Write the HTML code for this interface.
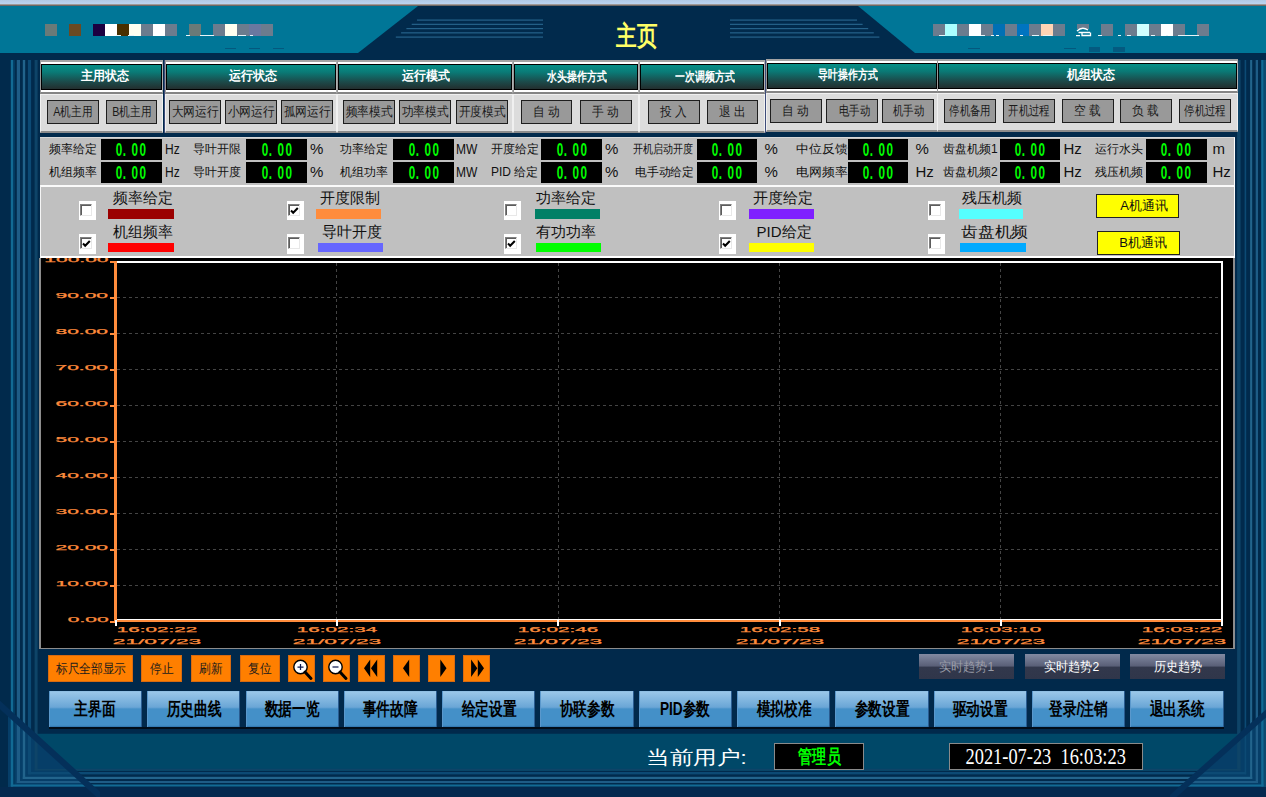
<!DOCTYPE html>
<html lang="zh"><head><meta charset="utf-8"><title>主页</title>
<style>
html,body{margin:0;padding:0;background:#012a4c;}
body{width:1266px;height:797px;overflow:hidden;position:relative;font-family:"Liberation Sans",sans-serif;}
#root{position:absolute;left:0;top:0;width:1266px;height:797px;overflow:hidden;}
.abs{position:absolute;}
.t{position:absolute;white-space:nowrap;overflow:visible;line-height:1;}
.c{display:flex;align-items:center;justify-content:center;white-space:nowrap;overflow:hidden;}
.c>span{display:inline-block;}
.hdr{position:absolute;box-sizing:border-box;background:#fff;border-left:1px solid #9a9a9a;border-right:1px solid #b0b0b0;border-top:2px solid #a4a4a4;border-bottom:2px solid #858585;}
.hdr>div{position:absolute;left:0;top:2px;right:0;bottom:2px;box-sizing:border-box;border:1px solid #000;background:linear-gradient(#089088 0%,#0a7a76 30%,#1c4a4a 70%,#222e2e 100%);color:#fff;font-weight:bold;font-size:13px;}
.brow{position:absolute;box-sizing:border-box;background:#dcdcdc;border:1px solid #f0f0f0;border-bottom:2px solid #8c8c8c;}
.sb{position:absolute;box-sizing:border-box;background:#999;border:1px solid #1e1e1e;color:#1a1a1a;font-size:13px;}
.lab{position:absolute;font-size:12px;color:#111;white-space:nowrap;line-height:14px;height:14px;}
.val{position:absolute;background:#000;color:#00ff00;font-size:17.6px;font-weight:bold;}
.val b{display:inline-block;width:11.9px;text-align:center;font-weight:bold;}
.val b.p{text-align:left;}
.unit{position:absolute;font-size:15px;color:#111;line-height:16px;white-space:nowrap;}
.cb{position:absolute;width:17px;height:20px;background:#fff;}
.cb i{position:absolute;left:1px;top:3px;width:12px;height:12px;box-sizing:border-box;border:1px solid #808080;border-right-color:#e8e8e8;border-bottom-color:#e8e8e8;background:#fff;}
.cb i:before{content:"";position:absolute;left:0;top:0;width:9px;height:9px;border-left:1px solid #5c5c5c;border-top:1px solid #5c5c5c;}
.bar{position:absolute;height:10px;}
.ll{position:absolute;font-size:15px;color:#111;white-space:nowrap;line-height:16px;}
.ob{position:absolute;box-sizing:border-box;background:#ff7f00;border:1px solid #d86a10;color:#1a1a1a;font-size:13px;}
.nb{position:absolute;box-sizing:border-box;height:36px;background:linear-gradient(#8cbce0 0%,#98c6e8 4%,#6aa6d6 45%,#4490c8 50%,#4490c8 95%,#2f72aa 100%);border-right:1px solid #2a5c90;border-left:1px solid #5a98cc;color:#000;font-weight:bold;font-size:18px;}
.tb{position:absolute;box-sizing:border-box;height:24px;background:linear-gradient(#828aa2 0%,#5a6078 47%,#32384c 54%,#30364a 100%);font-size:13px;}
.ax{position:absolute;color:#ff8c3c;-webkit-text-stroke:0.25px #ff8c3c;font-size:8px;line-height:8px;white-space:nowrap;transform-origin:0 0;}
</style></head><body><div id="root">

<svg class="abs" style="left:0;top:0" width="1266" height="797" viewBox="0 0 1266 797">
<rect x="0" y="0" width="1266" height="797" fill="#012a4c"/>
<rect x="37" y="733.5" width="1201" height="37.5" fill="#004868"/>
<rect x="37" y="648" width="1201" height="85.5" fill="#01294b"/>
<polygon points="8,712 96,792 8,792" fill="#063e68"/>
<polygon points="1266,713 1182,788 1266,788" fill="#063e68"/>
<rect x="1263.6" y="60" width="2.4" height="728" fill="#0c4a70"/>
<rect x="13.2" y="60" width="1.8" height="725" fill="#023a60"/>
<rect x="10.8" y="60" width="2.4" height="726.5" fill="#126a94"/>
<rect x="1261.2" y="60" width="2.4" height="726.5" fill="#126a94"/>
<rect x="10.8" y="784.5" width="1252.8" height="2.0" fill="#126a94"/>
<rect x="16.8" y="60" width="3.2" height="723.0" fill="#1e5c86"/>
<rect x="1255.7" y="60" width="2.3" height="723.0" fill="#1e5c86"/>
<rect x="16.8" y="781.0" width="1241.2" height="2.0" fill="#1e5c86"/>
<rect x="22.8" y="60" width="2.4" height="719.0" fill="#22648c"/>
<rect x="1250.1" y="60" width="2.1" height="719.0" fill="#22648c"/>
<rect x="22.8" y="776.8" width="1229.4" height="2.2" fill="#22648c"/>
<rect x="27.9" y="60" width="3.2" height="714.4" fill="#0c4a74"/>
<rect x="1244.6" y="60" width="1.6" height="714.4" fill="#0c4a74"/>
<rect x="27.9" y="772.0" width="1218.3" height="2.4" fill="#0c4a74"/>
<rect x="34.6" y="60" width="3.0" height="710.6" fill="#0e4468"/>
<rect x="1237.1" y="60" width="3.5" height="710.6" fill="#0e4468"/>
<rect x="34.6" y="768.8" width="1206.0" height="1.8" fill="#0e4468"/>
<rect x="0" y="787" width="1266" height="10" fill="#04294f"/>
<polygon points="0,700.8 0,709.2 100,800.2 100,791.8" fill="#04305a"/>
<polygon points="1266,709.4 1266,717.4 1170,803 1170,795" fill="#04305a"/>
<defs><linearGradient id="tg" x1="0" y1="0" x2="0" y2="1"><stop offset="0" stop-color="#b0c9e5"/><stop offset="1" stop-color="#bcd4f0"/></linearGradient></defs>
<rect x="0" y="0" width="1266" height="4" fill="url(#tg)"/>
<rect x="0" y="4" width="1266" height="1" fill="#a09a98"/>
<rect x="0" y="5" width="1266" height="1" fill="#6e6866"/>
<rect x="0" y="6" width="1266" height="47" fill="#007697"/>
<polygon points="418,6 858,6 915,53 915,58 358,58 358,53" fill="#012a4c"/>
<rect x="0" y="53" width="1266" height="6" fill="#012a4c"/>
<rect x="417.0" y="19.50" width="126.0" height="1.2" fill="#25628a"/>
<rect x="730" y="19.50" width="127.0" height="1.2" fill="#25628a"/>
<rect x="411.7" y="23.75" width="131.3" height="1.2" fill="#25628a"/>
<rect x="730" y="23.75" width="132.6" height="1.2" fill="#25628a"/>
<rect x="406.4" y="28.00" width="136.6" height="1.2" fill="#25628a"/>
<rect x="730" y="28.00" width="138.2" height="1.2" fill="#25628a"/>
<rect x="401.1" y="32.25" width="141.9" height="1.2" fill="#25628a"/>
<rect x="730" y="32.25" width="143.8" height="1.2" fill="#25628a"/>
<rect x="395.8" y="36.50" width="147.2" height="1.2" fill="#25628a"/>
<rect x="730" y="36.50" width="149.4" height="1.2" fill="#25628a"/>
</svg>
<div class="abs" style="left:44.5px;top:23.5px;width:12px;height:12px;background:#6a7a78"></div>
<div class="abs" style="left:68.5px;top:23.5px;width:12px;height:12px;background:#6a4a22"></div>
<div class="abs" style="left:92.5px;top:23.5px;width:12px;height:12px;background:#1c0040"></div>
<div class="abs" style="left:104.5px;top:23.5px;width:12px;height:12px;background:#fff"></div>
<div class="abs" style="left:116.5px;top:23.5px;width:12px;height:12px;background:#4a3000"></div>
<div class="abs" style="left:128.5px;top:23.5px;width:12px;height:12px;background:#fffff0"></div>
<div class="abs" style="left:140.5px;top:23.5px;width:12px;height:12px;background:#6c7c8e"></div>
<div class="abs" style="left:152.5px;top:23.5px;width:12px;height:12px;background:#fff"></div>
<div class="abs" style="left:164.5px;top:23.5px;width:12px;height:12px;background:#6c7c8e"></div>
<div class="abs" style="left:188.5px;top:23.5px;width:12px;height:12px;background:#6a7a78"></div>
<div class="abs" style="left:212.5px;top:23.5px;width:12px;height:12px;background:#6c7c8e"></div>
<div class="abs" style="left:224.5px;top:23.5px;width:12px;height:12px;background:#fffff0"></div>
<div class="abs" style="left:236.5px;top:23.5px;width:12px;height:12px;background:#6c7c8e"></div>
<div class="abs" style="left:248.5px;top:23.5px;width:12px;height:12px;background:#6a78a0"></div>
<div class="abs" style="left:260.5px;top:23.5px;width:12px;height:12px;background:#6c7c8e"></div>
<div class="abs" style="left:932.5px;top:23.5px;width:12px;height:12px;background:#6c7c8e"></div>
<div class="abs" style="left:944.5px;top:23.5px;width:12px;height:12px;background:#aaffff"></div>
<div class="abs" style="left:956.5px;top:23.5px;width:12px;height:12px;background:#6c7c8e"></div>
<div class="abs" style="left:968.5px;top:23.5px;width:12px;height:12px;background:#fff"></div>
<div class="abs" style="left:980.5px;top:23.5px;width:12px;height:12px;background:#6c7c8e"></div>
<div class="abs" style="left:992.5px;top:23.5px;width:12px;height:12px;background:#0070b4"></div>
<div class="abs" style="left:1004.5px;top:23.5px;width:12px;height:12px;background:#6c7c8e"></div>
<div class="abs" style="left:1016.5px;top:23.5px;width:12px;height:12px;background:#0074c0"></div>
<div class="abs" style="left:1028.5px;top:23.5px;width:12px;height:12px;background:#6c7c8e"></div>
<div class="abs" style="left:1040.5px;top:23.5px;width:12px;height:12px;background:#ffd4b4"></div>
<div class="abs" style="left:1052.5px;top:23.5px;width:12px;height:12px;background:#6c7c8e"></div>
<div class="abs" style="left:1100.5px;top:23.5px;width:12px;height:12px;background:#6c7c8e"></div>
<div class="abs" style="left:1124.5px;top:23.5px;width:12px;height:12px;background:#6c7c8e"></div>
<div class="abs" style="left:1136.5px;top:23.5px;width:12px;height:12px;background:#d0ffff"></div>
<div class="abs" style="left:1148.5px;top:23.5px;width:12px;height:12px;background:#6c7c8e"></div>
<div class="abs" style="left:1160.5px;top:23.5px;width:12px;height:12px;background:#fff"></div>
<div class="abs" style="left:1172.5px;top:23.5px;width:12px;height:12px;background:#6c7c8e"></div>
<div class="abs" style="left:1196.5px;top:23.5px;width:12px;height:12px;background:#6c7c8e"></div>
<div class="abs" style="left:224.6px;top:47.6px;width:11.8px;height:1.2px;background:#04587e"></div>
<div class="abs" style="left:248.6px;top:47.6px;width:11.8px;height:1.2px;background:#04587e"></div>
<div class="abs" style="left:272.6px;top:47.6px;width:11.8px;height:1.2px;background:#04587e"></div>
<div class="abs" style="left:968.4px;top:47.6px;width:11.5px;height:1.2px;background:#04587e"></div>
<div class="abs" style="left:1064.4px;top:47.6px;width:11.6px;height:1.2px;background:#04587e"></div>
<div class="abs" style="left:1088.8px;top:47.2px;width:11.4px;height:4.5px;background:#045a80"></div>
<div class="abs" style="left:1112.5px;top:47.2px;width:12px;height:4.5px;background:#045a80"></div>
<div class="abs" style="left:1076.5px;top:23.5px;width:12px;height:5px;background:#6c7c8e"></div>
<svg class="abs" style="left:1070px;top:20px" width="30" height="20" viewBox="1070 20 30 20"><path d="M1077 31 Q1082 26 1088 30 M1078.5 32.5 H1090 M1082 33 V35.5 H1090.5 V32.5 M1076 35.6 H1080" fill="none" stroke="#fff" stroke-width="1.3"/></svg>
<div class="abs" style="left:939px;top:35.3px;width:6px;height:1px;background:#e8f4f8"></div>
<div class="abs" style="left:980.5px;top:35.3px;width:4px;height:1px;background:#e8f4f8"></div>
<div class="abs" style="left:991px;top:35.3px;width:2.5px;height:1px;background:#e8f4f8"></div>
<div class="abs" style="left:996px;top:35.3px;width:2.5px;height:1px;background:#e8f4f8"></div>
<div class="abs" style="left:1020px;top:35.3px;width:3px;height:1px;background:#e8f4f8"></div>
<div class="abs" style="left:1032px;top:35.3px;width:7px;height:1px;background:#e8f4f8"></div>
<div class="abs" style="left:1043px;top:35.3px;width:9px;height:1px;background:#e8f4f8"></div>
<div class="abs" style="left:1098px;top:35.3px;width:4px;height:1px;background:#e8f4f8"></div>
<div class="abs" style="left:1118px;top:35.3px;width:3px;height:1px;background:#e8f4f8"></div>
<div class="abs" style="left:1127px;top:35.3px;width:3.5px;height:1px;background:#e8f4f8"></div>
<div class="abs" style="left:1151px;top:35.3px;width:4px;height:1px;background:#e8f4f8"></div>
<div class="abs" style="left:1166px;top:35.3px;width:2px;height:1px;background:#e8f4f8"></div>
<div class="abs" style="left:1178px;top:35.3px;width:21px;height:1px;background:#e8f4f8"></div>
<div class="abs" style="left:116px;top:35.3px;width:5px;height:1px;background:#e8f4f8"></div>
<div class="abs" style="left:128px;top:35.3px;width:6px;height:1px;background:#e8f4f8"></div>
<div class="abs" style="left:186px;top:35.3px;width:4px;height:1px;background:#e8f4f8"></div>
<div class="abs" style="left:200px;top:35.3px;width:12px;height:1px;background:#e8f4f8"></div>
<div class="abs" style="left:211px;top:35.3px;width:3px;height:1px;background:#e8f4f8"></div>
<div class="abs" style="left:238px;top:35.3px;width:8px;height:1px;background:#e8f4f8"></div>
<div class="abs" style="left:250px;top:35.3px;width:3px;height:1px;background:#e8f4f8"></div>
<div class="abs c" style="left:597px;top:19px;width:80px;height:34px;color:#ffff66;font-weight:bold;font-size:27px;overflow:visible"><span style="transform:scaleX(.76)">主页</span></div>
<div class="hdr" style="left:40px;top:60px;width:123px;height:34px"><div class="c"><span style="transform:scaleX(0.92);position:relative;left:3.5px;top:-1px">主用状态</span></div></div>
<div class="brow" style="left:40px;top:94px;width:123px;height:39px"></div>
<div class="sb c" style="left:47px;top:100px;width:52px;height:24px"><span style="transform:scaleX(0.82);position:relative;left:0px">A机主用</span></div>
<div class="sb c" style="left:106px;top:100px;width:51px;height:24px"><span style="transform:scaleX(0.82);position:relative;left:0px">B机主用</span></div>
<div class="hdr" style="left:165px;top:60px;width:172px;height:34px"><div class="c"><span style="transform:scaleX(0.92);position:relative;left:2px;top:-1px">运行状态</span></div></div>
<div class="brow" style="left:165px;top:94px;width:172px;height:39px"></div>
<div class="sb c" style="left:169px;top:100px;width:52px;height:24px"><span style="transform:scaleX(0.9);position:relative;left:0px">大网运行</span></div>
<div class="sb c" style="left:225px;top:100px;width:52px;height:24px"><span style="transform:scaleX(0.9);position:relative;left:0px">小网运行</span></div>
<div class="sb c" style="left:281px;top:100px;width:52px;height:24px"><span style="transform:scaleX(0.9);position:relative;left:0px">孤网运行</span></div>
<div class="hdr" style="left:336.5px;top:60px;width:176.0px;height:34px"><div class="c"><span style="transform:scaleX(0.92);position:relative;left:1.5px;top:-1px">运行模式</span></div></div>
<div class="brow" style="left:336.5px;top:94px;width:176.0px;height:39px"></div>
<div class="sb c" style="left:343px;top:100px;width:52px;height:24px"><span style="transform:scaleX(0.9);position:relative;left:0px">频率模式</span></div>
<div class="sb c" style="left:399px;top:100px;width:52px;height:24px"><span style="transform:scaleX(0.9);position:relative;left:0px">功率模式</span></div>
<div class="sb c" style="left:456px;top:100px;width:52px;height:24px"><span style="transform:scaleX(0.9);position:relative;left:0px">开度模式</span></div>
<div class="hdr" style="left:512.5px;top:60px;width:126.5px;height:34px"><div class="c"><span style="transform:scaleX(0.76);position:relative;left:1.3px;top:0px">水头操作方式</span></div></div>
<div class="brow" style="left:512.5px;top:94px;width:126.5px;height:39px"></div>
<div class="sb c" style="left:521px;top:100px;width:51px;height:24px"><span style="transform:scaleX(0.9);position:relative;left:0px">自 动</span></div>
<div class="sb c" style="left:580px;top:100px;width:52px;height:24px"><span style="transform:scaleX(0.9);position:relative;left:0px">手 动</span></div>
<div class="hdr" style="left:639px;top:60px;width:126px;height:34px"><div class="c"><span style="transform:scaleX(0.76);position:relative;left:3.2px;top:0px">一次调频方式</span></div></div>
<div class="brow" style="left:639px;top:94px;width:126px;height:39px"></div>
<div class="sb c" style="left:648px;top:100px;width:52px;height:24px"><span style="transform:scaleX(0.9);position:relative;left:0px">投 入</span></div>
<div class="sb c" style="left:707px;top:100px;width:51px;height:24px"><span style="transform:scaleX(0.9);position:relative;left:0px">退 出</span></div>
<div class="hdr" style="left:766px;top:59px;width:171.5px;height:34px"><div class="c"><span style="transform:scaleX(0.76);position:relative;left:-3.7px;top:-1px">导叶操作方式</span></div></div>
<div class="brow" style="left:766px;top:93px;width:171.5px;height:39px"></div>
<div class="sb c" style="left:770px;top:99px;width:52px;height:24px"><span style="transform:scaleX(0.9);position:relative;left:0px">自 动</span></div>
<div class="sb c" style="left:826px;top:99px;width:52px;height:24px"><span style="transform:scaleX(0.8);position:relative;left:2.5px">电手动</span></div>
<div class="sb c" style="left:882px;top:99px;width:52px;height:24px"><span style="transform:scaleX(0.8);position:relative;left:0px">机手动</span></div>
<div class="hdr" style="left:937px;top:59px;width:300.5px;height:34px"><div class="c"><span style="transform:scaleX(0.92);position:relative;left:3.75px;top:-1px">机组状态</span></div></div>
<div class="brow" style="left:937px;top:93px;width:300.5px;height:39px"></div>
<div class="sb c" style="left:944px;top:99px;width:52px;height:24px"><span style="transform:scaleX(0.8);position:relative;left:0px">停机备用</span></div>
<div class="sb c" style="left:1003px;top:99px;width:52px;height:24px"><span style="transform:scaleX(0.8);position:relative;left:0px">开机过程</span></div>
<div class="sb c" style="left:1062px;top:99px;width:52px;height:24px"><span style="transform:scaleX(0.9);position:relative;left:0px">空 载</span></div>
<div class="sb c" style="left:1120px;top:99px;width:52px;height:24px"><span style="transform:scaleX(0.9);position:relative;left:0px">负 载</span></div>
<div class="sb c" style="left:1179px;top:99px;width:52px;height:24px"><span style="transform:scaleX(0.8);position:relative;left:0px">停机过程</span></div>
<div class="abs" style="left:164px;top:60px;width:1px;height:73px;background:#3e4c7a"></div>
<div class="abs" style="left:765.3px;top:60px;width:1px;height:73px;background:#3e4c7a"></div>
<div class="abs" style="left:40px;top:137px;width:1195px;height:48px;box-sizing:border-box;background:#c0c0c0;border-right:1px solid #fff;border-top:1px solid #d8d8d8"></div>
<div class="lab" style="left:49px;top:142px;transform-origin:0 50%;transform:scaleX(1)">频率给定</div>
<div class="val c" style="left:101px;top:139px;width:60.5px;height:20.5px"><span style="transform:scaleX(.665);position:relative;top:1px"><b>0</b><b class="p">.</b><b>0</b><b>0</b></span></div>
<div class="unit" style="left:165px;top:141px;transform-origin:0 50%;transform:scaleX(0.8)">Hz</div>
<div class="lab" style="left:49px;top:165px;transform-origin:0 50%;transform:scaleX(1)">机组频率</div>
<div class="val c" style="left:101px;top:162px;width:60.5px;height:20.5px"><span style="transform:scaleX(.665);position:relative;top:1px"><b>0</b><b class="p">.</b><b>0</b><b>0</b></span></div>
<div class="unit" style="left:165px;top:164px;transform-origin:0 50%;transform:scaleX(0.8)">Hz</div>
<div class="lab" style="left:193px;top:142px;transform-origin:0 50%;transform:scaleX(1)">导叶开限</div>
<div class="val c" style="left:246px;top:139px;width:61px;height:20.5px"><span style="transform:scaleX(.665);position:relative;top:1px"><b>0</b><b class="p">.</b><b>0</b><b>0</b></span></div>
<div class="unit" style="left:310px;top:141px;transform-origin:0 50%;transform:scaleX(1)">%</div>
<div class="lab" style="left:193px;top:165px;transform-origin:0 50%;transform:scaleX(1)">导叶开度</div>
<div class="val c" style="left:246px;top:162px;width:61px;height:20.5px"><span style="transform:scaleX(.665);position:relative;top:1px"><b>0</b><b class="p">.</b><b>0</b><b>0</b></span></div>
<div class="unit" style="left:310px;top:164px;transform-origin:0 50%;transform:scaleX(1)">%</div>
<div class="lab" style="left:340px;top:142px;transform-origin:0 50%;transform:scaleX(1)">功率给定</div>
<div class="val c" style="left:393px;top:139px;width:61px;height:20.5px"><span style="transform:scaleX(.665);position:relative;top:1px"><b>0</b><b class="p">.</b><b>0</b><b>0</b></span></div>
<div class="unit" style="left:456px;top:141px;transform-origin:0 50%;transform:scaleX(0.8)">MW</div>
<div class="lab" style="left:340px;top:165px;transform-origin:0 50%;transform:scaleX(1)">机组功率</div>
<div class="val c" style="left:393px;top:162px;width:61px;height:20.5px"><span style="transform:scaleX(.665);position:relative;top:1px"><b>0</b><b class="p">.</b><b>0</b><b>0</b></span></div>
<div class="unit" style="left:456px;top:164px;transform-origin:0 50%;transform:scaleX(0.8)">MW</div>
<div class="lab" style="left:491px;top:142px;transform-origin:0 50%;transform:scaleX(1)">开度给定</div>
<div class="val c" style="left:541px;top:139px;width:61px;height:20.5px"><span style="transform:scaleX(.665);position:relative;top:1px"><b>0</b><b class="p">.</b><b>0</b><b>0</b></span></div>
<div class="unit" style="left:605px;top:141px;transform-origin:0 50%;transform:scaleX(1)">%</div>
<div class="lab" style="left:491px;top:165px;transform-origin:0 50%;transform:scaleX(1)">PID 给定</div>
<div class="val c" style="left:541px;top:162px;width:61px;height:20.5px"><span style="transform:scaleX(.665);position:relative;top:1px"><b>0</b><b class="p">.</b><b>0</b><b>0</b></span></div>
<div class="unit" style="left:605px;top:164px;transform-origin:0 50%;transform:scaleX(1)">%</div>
<div class="lab" style="left:632.5px;top:142px;transform-origin:0 50%;transform:scaleX(0.84)">开机启动开度</div>
<div class="val c" style="left:696.5px;top:139px;width:60.5px;height:20.5px"><span style="transform:scaleX(.665);position:relative;top:1px"><b>0</b><b class="p">.</b><b>0</b><b>0</b></span></div>
<div class="unit" style="left:764.5px;top:141px;transform-origin:0 50%;transform:scaleX(1)">%</div>
<div class="lab" style="left:635px;top:165px;transform-origin:0 50%;transform:scaleX(0.98)">电手动给定</div>
<div class="val c" style="left:696.5px;top:162px;width:60.5px;height:20.5px"><span style="transform:scaleX(.665);position:relative;top:1px"><b>0</b><b class="p">.</b><b>0</b><b>0</b></span></div>
<div class="unit" style="left:764.5px;top:164px;transform-origin:0 50%;transform:scaleX(1)">%</div>
<div class="lab" style="left:795.5px;top:142px;transform-origin:0 50%;transform:scaleX(1.07)">中位反馈</div>
<div class="val c" style="left:848px;top:139px;width:60px;height:20.5px"><span style="transform:scaleX(.665);position:relative;top:1px"><b>0</b><b class="p">.</b><b>0</b><b>0</b></span></div>
<div class="unit" style="left:915.5px;top:141px;transform-origin:0 50%;transform:scaleX(1)">%</div>
<div class="lab" style="left:795.5px;top:165px;transform-origin:0 50%;transform:scaleX(1.07)">电网频率</div>
<div class="val c" style="left:848px;top:162px;width:60px;height:20.5px"><span style="transform:scaleX(.665);position:relative;top:1px"><b>0</b><b class="p">.</b><b>0</b><b>0</b></span></div>
<div class="unit" style="left:915.5px;top:164px;transform-origin:0 50%;transform:scaleX(1)">Hz</div>
<div class="lab" style="left:943px;top:142px;transform-origin:0 50%;transform:scaleX(1)">齿盘机频1</div>
<div class="val c" style="left:1000px;top:139px;width:59.5px;height:20.5px"><span style="transform:scaleX(.665);position:relative;top:1px"><b>0</b><b class="p">.</b><b>0</b><b>0</b></span></div>
<div class="unit" style="left:1063.5px;top:141px;transform-origin:0 50%;transform:scaleX(1)">Hz</div>
<div class="lab" style="left:943px;top:165px;transform-origin:0 50%;transform:scaleX(1)">齿盘机频2</div>
<div class="val c" style="left:1000px;top:162px;width:59.5px;height:20.5px"><span style="transform:scaleX(.665);position:relative;top:1px"><b>0</b><b class="p">.</b><b>0</b><b>0</b></span></div>
<div class="unit" style="left:1063.5px;top:164px;transform-origin:0 50%;transform:scaleX(1)">Hz</div>
<div class="lab" style="left:1094.5px;top:142px;transform-origin:0 50%;transform:scaleX(1)">运行水头</div>
<div class="val c" style="left:1146px;top:139px;width:60.5px;height:20.5px"><span style="transform:scaleX(.665);position:relative;top:1px"><b>0</b><b class="p">.</b><b>0</b><b>0</b></span></div>
<div class="unit" style="left:1212.5px;top:141px;transform-origin:0 50%;transform:scaleX(1)">m</div>
<div class="lab" style="left:1094.5px;top:165px;transform-origin:0 50%;transform:scaleX(1)">残压机频</div>
<div class="val c" style="left:1146px;top:162px;width:60.5px;height:20.5px"><span style="transform:scaleX(.665);position:relative;top:1px"><b>0</b><b class="p">.</b><b>0</b><b>0</b></span></div>
<div class="unit" style="left:1212.5px;top:164px;transform-origin:0 50%;transform:scaleX(1)">Hz</div>
<div class="abs" style="left:40px;top:185px;width:1195px;height:73px;box-sizing:border-box;background:#c0c0c0;border-top:2px solid #fafafa;border-left:1px solid #f4f4f4;border-right:1px solid #fff;border-bottom:2px solid #fff"></div>
<div class="cb" style="height:19px;left:79px;top:201px"><i></i></div>
<div class="cb" style="left:79px;top:234px"><i></i><svg class="abs" style="left:3px;top:6px" width="9" height="8" viewBox="0 0 9 8"><path d="M1 3.5 L3.2 5.8 L7.8 1" fill="none" stroke="#000" stroke-width="2"/></svg></div>
<div class="bar" style="left:108px;top:209px;width:66px;background:#9b0000"></div>
<div class="bar" style="left:108px;top:243px;height:9px;width:66px;background:#ff0000"></div>
<div class="ll" style="left:113px;top:190px">频率给定</div>
<div class="ll" style="left:113px;top:224px;">机组频率</div>
<div class="cb" style="height:19px;left:287px;top:201px"><i></i><svg class="abs" style="left:3px;top:6px" width="9" height="8" viewBox="0 0 9 8"><path d="M1 3.5 L3.2 5.8 L7.8 1" fill="none" stroke="#000" stroke-width="2"/></svg></div>
<div class="cb" style="left:287px;top:234px"><i></i></div>
<div class="bar" style="left:316px;top:209px;width:65px;background:#ff8c3c"></div>
<div class="bar" style="left:318px;top:243px;height:9px;width:64.5px;background:#6666ff"></div>
<div class="ll" style="left:320px;top:190px">开度限制</div>
<div class="ll" style="left:322px;top:224px;">导叶开度</div>
<div class="cb" style="height:19px;left:504px;top:201px"><i></i></div>
<div class="cb" style="left:504px;top:234px"><i></i><svg class="abs" style="left:3px;top:6px" width="9" height="8" viewBox="0 0 9 8"><path d="M1 3.5 L3.2 5.8 L7.8 1" fill="none" stroke="#000" stroke-width="2"/></svg></div>
<div class="bar" style="left:534.5px;top:209px;width:65.0px;background:#008066"></div>
<div class="bar" style="left:536px;top:243px;height:9px;width:64.5px;background:#00ff00"></div>
<div class="ll" style="left:536px;top:190px">功率给定</div>
<div class="ll" style="left:536px;top:224px;">有功功率</div>
<div class="cb" style="height:19px;left:718.5px;top:201px"><i></i></div>
<div class="cb" style="left:718.5px;top:234px"><i></i><svg class="abs" style="left:3px;top:6px" width="9" height="8" viewBox="0 0 9 8"><path d="M1 3.5 L3.2 5.8 L7.8 1" fill="none" stroke="#000" stroke-width="2"/></svg></div>
<div class="bar" style="left:748.5px;top:209px;width:65.5px;background:#7f1fff"></div>
<div class="bar" style="left:748.5px;top:243px;height:9px;width:65.5px;background:#ffff00"></div>
<div class="ll" style="left:752.5px;top:190px">开度给定</div>
<div class="ll" style="left:756.5px;top:224px;">PID给定</div>
<div class="cb" style="height:19px;left:928px;top:201px"><i></i></div>
<div class="cb" style="left:928px;top:234px"><i></i></div>
<div class="bar" style="left:958.5px;top:209px;width:64.5px;background:#55ffff"></div>
<div class="bar" style="left:960px;top:243px;height:9px;width:65.5px;background:#00aaff"></div>
<div class="ll" style="left:961.5px;top:190px">残压机频</div>
<div class="ll" style="left:961px;top:224px;transform-origin:0 50%;transform:scaleX(1.12);">齿盘机频</div>
<div class="abs c" style="left:1096px;top:194px;width:83px;height:24px;box-sizing:border-box;background:#ffff00;border:1px solid #222;font-size:13px;color:#111"><span style="position:relative;left:6.5px">A机通讯</span></div>
<div class="abs c" style="left:1097px;top:231px;width:83px;height:24px;box-sizing:border-box;background:#ffff00;border:1px solid #222;font-size:13px;color:#111"><span style="position:relative;left:4.5px">B机通讯</span></div>
<div class="abs" style="left:39px;top:258px;width:1196px;height:390.6px;box-sizing:border-box;background:#000;border-left:2px solid #8c8c8c;border-right:2px solid #8c8c8c;border-bottom:1.6px solid #8c8c8c;overflow:hidden">
<svg class="abs" style="left:0;top:0" width="1192" height="389" viewBox="41 258 1192 389" shape-rendering="crispEdges">
<line x1="117" y1="297.5" x2="1221" y2="297.5" stroke="#444" stroke-width="1" stroke-dasharray="3,3"/>
<line x1="117" y1="333.5" x2="1221" y2="333.5" stroke="#444" stroke-width="1" stroke-dasharray="3,3"/>
<line x1="117" y1="369.5" x2="1221" y2="369.5" stroke="#444" stroke-width="1" stroke-dasharray="3,3"/>
<line x1="117" y1="405.5" x2="1221" y2="405.5" stroke="#444" stroke-width="1" stroke-dasharray="3,3"/>
<line x1="117" y1="441.5" x2="1221" y2="441.5" stroke="#444" stroke-width="1" stroke-dasharray="3,3"/>
<line x1="117" y1="477.5" x2="1221" y2="477.5" stroke="#444" stroke-width="1" stroke-dasharray="3,3"/>
<line x1="117" y1="513.5" x2="1221" y2="513.5" stroke="#444" stroke-width="1" stroke-dasharray="3,3"/>
<line x1="117" y1="549.5" x2="1221" y2="549.5" stroke="#444" stroke-width="1" stroke-dasharray="3,3"/>
<line x1="117" y1="585.5" x2="1221" y2="585.5" stroke="#444" stroke-width="1" stroke-dasharray="3,3"/>
<line x1="336.8" y1="263" x2="336.8" y2="619" stroke="#444" stroke-width="1" stroke-dasharray="3,3"/>
<line x1="558.2" y1="263" x2="558.2" y2="619" stroke="#444" stroke-width="1" stroke-dasharray="3,3"/>
<line x1="779.5" y1="263" x2="779.5" y2="619" stroke="#444" stroke-width="1" stroke-dasharray="3,3"/>
<line x1="1000.8" y1="263" x2="1000.8" y2="619" stroke="#444" stroke-width="1" stroke-dasharray="3,3"/>
<rect x="116" y="261" width="1107" height="1.5" fill="#fff"/>
<rect x="1221" y="261" width="2" height="360" fill="#fff"/>
<rect x="114" y="261" width="3" height="361" fill="#ff8c3c"/>
<rect x="110" y="261.0" width="5" height="2" fill="#ff8c3c"/>
<rect x="110" y="297.0" width="5" height="2" fill="#ff8c3c"/>
<rect x="110" y="333.0" width="5" height="2" fill="#ff8c3c"/>
<rect x="110" y="369.0" width="5" height="2" fill="#ff8c3c"/>
<rect x="110" y="405.0" width="5" height="2" fill="#ff8c3c"/>
<rect x="110" y="441.0" width="5" height="2" fill="#ff8c3c"/>
<rect x="110" y="477.0" width="5" height="2" fill="#ff8c3c"/>
<rect x="110" y="513.0" width="5" height="2" fill="#ff8c3c"/>
<rect x="110" y="549.0" width="5" height="2" fill="#ff8c3c"/>
<rect x="110" y="585.0" width="5" height="2" fill="#ff8c3c"/>
<rect x="110" y="621.0" width="5" height="2" fill="#ff8c3c"/>
<rect x="114" y="620" width="1109" height="2" fill="#ff8c3c"/>
<rect x="117" y="619" width="1105" height="1" fill="#fff"/>
<rect x="114.5" y="620" width="2" height="6" fill="#fff"/>
<rect x="335.8" y="620" width="2" height="6" fill="#fff"/>
<rect x="557.2" y="620" width="2" height="6" fill="#fff"/>
<rect x="778.5" y="620" width="2" height="6" fill="#fff"/>
<rect x="999.8" y="620" width="2" height="6" fill="#fff"/>
<rect x="1221.2" y="620" width="2" height="6" fill="#fff"/>
</svg>
<div class="ax" style="right:1124.5px;top:-2.0px;transform-origin:100% 0;transform:scaleX(2.62)">100.00</div>
<div class="ax" style="right:1124.5px;top:34.0px;transform-origin:100% 0;transform:scaleX(2.62)">90.00</div>
<div class="ax" style="right:1124.5px;top:70.0px;transform-origin:100% 0;transform:scaleX(2.62)">80.00</div>
<div class="ax" style="right:1124.5px;top:106.0px;transform-origin:100% 0;transform:scaleX(2.62)">70.00</div>
<div class="ax" style="right:1124.5px;top:142.0px;transform-origin:100% 0;transform:scaleX(2.62)">60.00</div>
<div class="ax" style="right:1124.5px;top:178.0px;transform-origin:100% 0;transform:scaleX(2.62)">50.00</div>
<div class="ax" style="right:1124.5px;top:214.0px;transform-origin:100% 0;transform:scaleX(2.62)">40.00</div>
<div class="ax" style="right:1124.5px;top:250.0px;transform-origin:100% 0;transform:scaleX(2.62)">30.00</div>
<div class="ax" style="right:1124.5px;top:286.0px;transform-origin:100% 0;transform:scaleX(2.62)">20.00</div>
<div class="ax" style="right:1124.5px;top:322.0px;transform-origin:100% 0;transform:scaleX(2.62)">10.00</div>
<div class="ax" style="right:1124.5px;top:358.0px;transform-origin:100% 0;transform:scaleX(2.62)">0.00</div>
<div class="ax" style="left:65.5px;width:100px;text-align:center;top:368px;transform-origin:50% 0;transform:scaleX(2.58)">16:02:22</div>
<div class="ax" style="left:65.5px;width:100px;text-align:center;top:380px;transform-origin:50% 0;transform:scaleX(2.84)">21/07/23</div>
<div class="ax" style="left:245.8px;width:100px;text-align:center;top:368px;transform-origin:50% 0;transform:scaleX(2.58)">16:02:34</div>
<div class="ax" style="left:245.8px;width:100px;text-align:center;top:380px;transform-origin:50% 0;transform:scaleX(2.84)">21/07/23</div>
<div class="ax" style="left:467.2px;width:100px;text-align:center;top:368px;transform-origin:50% 0;transform:scaleX(2.58)">16:02:46</div>
<div class="ax" style="left:467.2px;width:100px;text-align:center;top:380px;transform-origin:50% 0;transform:scaleX(2.84)">21/07/23</div>
<div class="ax" style="left:688.5px;width:100px;text-align:center;top:368px;transform-origin:50% 0;transform:scaleX(2.58)">16:02:58</div>
<div class="ax" style="left:688.5px;width:100px;text-align:center;top:380px;transform-origin:50% 0;transform:scaleX(2.84)">21/07/23</div>
<div class="ax" style="left:909.8px;width:100px;text-align:center;top:368px;transform-origin:50% 0;transform:scaleX(2.58)">16:03:10</div>
<div class="ax" style="left:909.8px;width:100px;text-align:center;top:380px;transform-origin:50% 0;transform:scaleX(2.84)">21/07/23</div>
<div class="ax" style="left:1091.0px;width:100px;text-align:center;top:368px;transform-origin:50% 0;transform:scaleX(2.58)">16:03:22</div>
<div class="ax" style="left:1091.0px;width:100px;text-align:center;top:380px;transform-origin:50% 0;transform:scaleX(2.84)">21/07/23</div>
</div>
<div class="ob c" style="left:48px;top:655px;width:85px;height:27px"><span style="transform:scaleX(.9)">标尺全部显示</span></div>
<div class="ob c" style="left:141px;top:655px;width:41px;height:27px"><span style="transform:scaleX(.9)">停止</span></div>
<div class="ob c" style="left:190.5px;top:655px;width:40.5px;height:27px"><span style="transform:scaleX(.9)">刷新</span></div>
<div class="ob c" style="left:239.5px;top:655px;width:40.5px;height:27px"><span style="transform:scaleX(.9)">复位</span></div>
<div class="ob" style="left:288.0px;top:655px;width:27px;height:27px"><svg class="abs" style="left:-1px;top:-1px" width="27" height="27" viewBox="0 0 27 27"><circle cx="12.5" cy="12" r="6.7" fill="#fff" stroke="#000" stroke-width="1.4"/><path d="M17 17 L23 23.5" stroke="#000" stroke-width="3" stroke-linecap="round"/><path d="M9.5 12 H15.5 M12.5 9 V15" stroke="#101c50" stroke-width="1.25"/></svg></div>
<div class="ob" style="left:322.9px;top:655px;width:27px;height:27px"><svg class="abs" style="left:-1px;top:-1px" width="27" height="27" viewBox="0 0 27 27"><circle cx="12.5" cy="12" r="6.7" fill="#fff" stroke="#000" stroke-width="1.4"/><path d="M17 17 L23 23.5" stroke="#000" stroke-width="3" stroke-linecap="round"/><path d="M9.5 12 H15.5" stroke="#101c50" stroke-width="1.25"/></svg></div>
<div class="ob" style="left:357.9px;top:655px;width:27px;height:27px"><svg class="abs" style="left:-1px;top:-1px" width="27" height="27" viewBox="0 0 27 27"><path d="M6 13.2 L12.2 4.5 V22 Z M13 13.2 L19.2 4.5 V22 Z" fill="#000"/></svg></div>
<div class="ob" style="left:392.9px;top:655px;width:27px;height:27px"><svg class="abs" style="left:-1px;top:-1px" width="27" height="27" viewBox="0 0 27 27"><path d="M10 13.2 L16.2 4.5 V22 Z" fill="#000"/></svg></div>
<div class="ob" style="left:427.8px;top:655px;width:27px;height:27px"><svg class="abs" style="left:-1px;top:-1px" width="27" height="27" viewBox="0 0 27 27"><path d="M18.5 13.2 L12.3 4.5 V22 Z" fill="#000"/></svg></div>
<div class="ob" style="left:462.8px;top:655px;width:27px;height:27px"><svg class="abs" style="left:-1px;top:-1px" width="27" height="27" viewBox="0 0 27 27"><path d="M14.3 13.2 L8.1 4.5 V22 Z M21 13.2 L14.8 4.5 V22 Z" fill="#000"/></svg></div>
<div class="tb c" style="left:919px;top:654px;width:95px;height:25px;color:#9a9ca8"><span style="transform:scaleX(.93)">实时趋势1</span></div>
<div class="tb c" style="left:1024.5px;top:654px;width:95px;height:25px;color:#fff"><span style="transform:scaleX(.93)">实时趋势2</span></div>
<div class="tb c" style="left:1130px;top:654px;width:95px;height:25px;color:#fff"><span style="transform:scaleX(.93)">历史趋势</span></div>
<div class="abs" style="left:49px;top:727px;width:1175px;height:2.2px;background:#000c18"></div>
<div class="nb c" style="left:48.8px;top:691px;width:93.2px"><span style="transform:scaleX(.76)">主界面</span></div>
<div class="nb c" style="left:147.1px;top:691px;width:93.2px"><span style="transform:scaleX(.76)">历史曲线</span></div>
<div class="nb c" style="left:245.5px;top:691px;width:93.2px"><span style="transform:scaleX(.76)">数据一览</span></div>
<div class="nb c" style="left:343.8px;top:691px;width:93.2px"><span style="transform:scaleX(.76)">事件故障</span></div>
<div class="nb c" style="left:442.1px;top:691px;width:93.2px"><span style="transform:scaleX(.76)">给定设置</span></div>
<div class="nb c" style="left:540.4px;top:691px;width:93.2px"><span style="transform:scaleX(.76)">协联参数</span></div>
<div class="nb c" style="left:638.8px;top:691px;width:93.2px"><span style="transform:scaleX(.76)">PID参数</span></div>
<div class="nb c" style="left:737.1px;top:691px;width:93.2px"><span style="transform:scaleX(.76)">模拟校准</span></div>
<div class="nb c" style="left:835.4px;top:691px;width:93.2px"><span style="transform:scaleX(.76)">参数设置</span></div>
<div class="nb c" style="left:933.8px;top:691px;width:93.2px"><span style="transform:scaleX(.76)">驱动设置</span></div>
<div class="nb c" style="left:1032.1px;top:691px;width:93.2px"><span style="transform:scaleX(.76)">登录/注销</span></div>
<div class="nb c" style="left:1130.4px;top:691px;width:93.2px"><span style="transform:scaleX(.76)">退出系统</span></div>
<div class="t" style="left:646px;top:748px;font-size:19px;color:#fff;transform-origin:0 0;transform:scaleX(1.24)">当前用户:</div>
<div class="abs c" style="left:774px;top:743px;width:90px;height:27px;box-sizing:border-box;background:#000;border:1px solid #8a8a8a;color:#00ff00;font-weight:bold;font-size:19px"><span style="transform:scaleX(.74)">管理员</span></div>
<div class="abs c" style="left:949px;top:743px;width:194px;height:27px;box-sizing:border-box;background:#000;border:1px solid #8a8a8a;color:#fff;font-family:'Liberation Serif',serif;font-size:24px"><span style="transform:scaleX(.766);white-space:pre">2021-07-23  16:03:23</span></div>
</div></body></html>
